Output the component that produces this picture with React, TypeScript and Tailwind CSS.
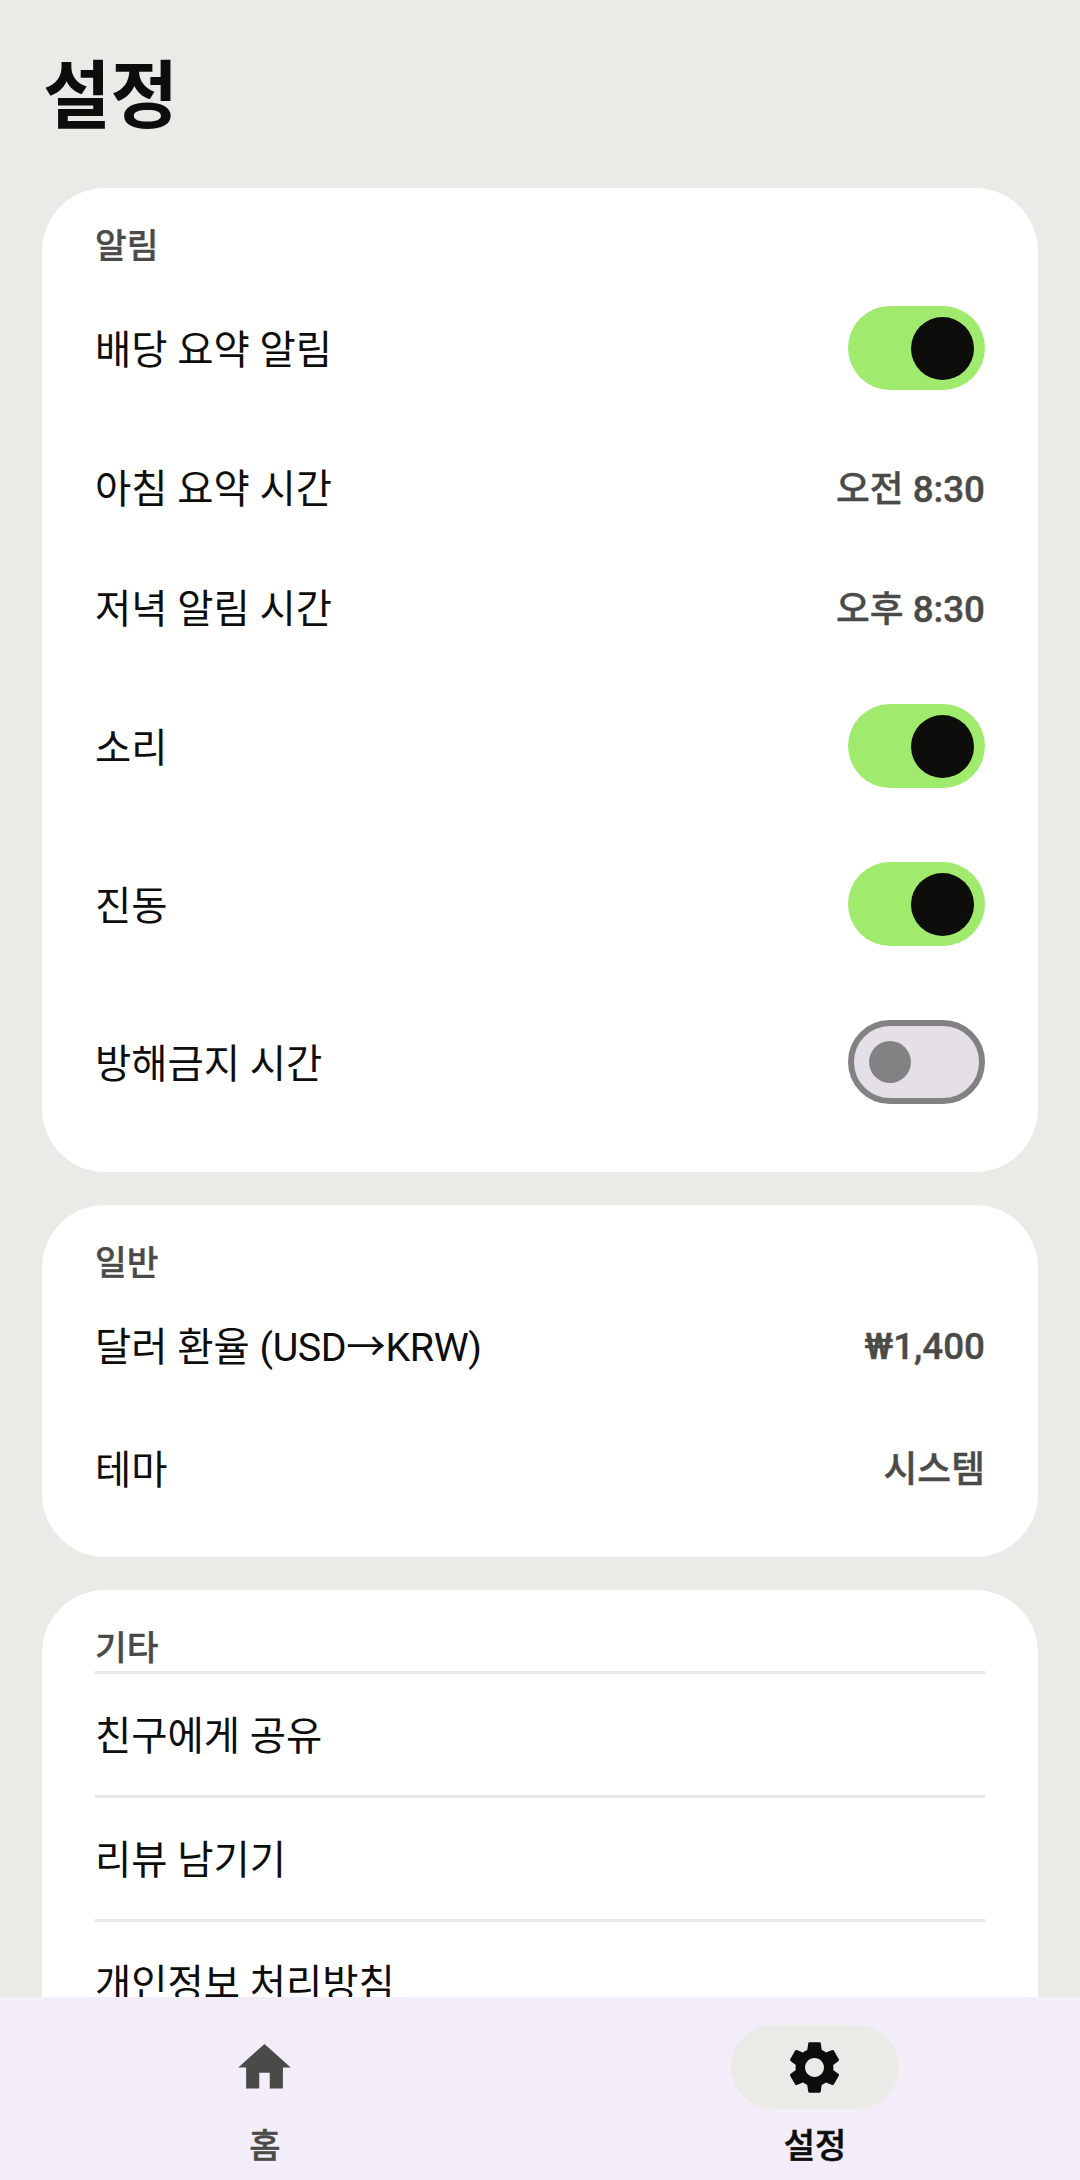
import React from "react";

const font = { fontFamily: '"Roboto", "Noto Sans CJK KR", sans-serif' };

function Toggle({ on }: { on: boolean }) {
  return on ? (
    <div className="flex h-[84px] w-[137px] shrink-0 items-center justify-end rounded-full bg-[#a0ea6e] pr-[11px]">
      <div className="h-[63px] w-[63px] rounded-full bg-[#0d0d0b]" />
    </div>
  ) : (
    <div className="flex h-[84px] w-[137px] shrink-0 items-center rounded-full border-[6px] border-[#828282] bg-[#e5e0e8] pl-[15px]">
      <div className="h-[42px] w-[42px] rounded-full bg-[#828282]" />
    </div>
  );
}

function ToggleRow({ label, on }: { label: string; on: boolean }) {
  return (
    <div className="flex h-[158px] items-center justify-between">
      <span className="pt-[5px] text-[39.4px] text-[#0d0d0b]">{label}</span>
      <Toggle on={on} />
    </div>
  );
}

function TimeRow({ label, value }: { label: string; value: string }) {
  return (
    <div className="flex h-[120px] items-center justify-between">
      <span className="pt-[5px] text-[39.4px] text-[#0d0d0b]">{label}</span>
      <span className="pt-[5px] text-[36.75px] font-medium text-[#4a4b48] [-webkit-text-stroke:0.4px_#4a4b48]">{value}</span>
    </div>
  );
}

function ValueRow({ label, value }: { label: React.ReactNode; value: string }) {
  return (
    <div className="flex h-[123px] items-center justify-between">
      <span className="pt-[1px] text-[39.4px] text-[#0d0d0b]">{label}</span>
      <span className="pb-[2px] text-[36.75px] font-medium text-[#4a4b48] [-webkit-text-stroke:0.4px_#4a4b48]">{value}</span>
    </div>
  );
}

function Label({ children }: { children: React.ReactNode }) {
  return (
    <div className="h-[42px] text-[34.5px] font-medium leading-[39px] text-[#4a4b48] [-webkit-text-stroke:0.3px_#4a4b48]">
      {children}
    </div>
  );
}

function LinkRow({ label }: { label: string }) {
  return (
    <div className="flex h-[124px] items-center border-t-[3px] border-[#e6e6e6] pt-[5px]">
      <span className="text-[39.4px] text-[#0d0d0b]">{label}</span>
    </div>
  );
}

export default function App() {
  return (
    <div className="flex h-[2180px] w-[1080px] flex-col overflow-hidden bg-[#e9ebe6]" style={font}>
      <main className="min-h-0 flex-1 overflow-hidden px-[42px]">
        <h1 className="h-[188px] pl-[1px] pt-[45px] text-[73.5px] font-bold leading-[104px] text-[#0d0d0b]">설정</h1>

        <section className="rounded-[63px] bg-white px-[53px] pb-[31px] pt-[39px]">
          <Label>알림</Label>
          <ToggleRow label="배당 요약 알림" on />
          <TimeRow label="아침 요약 시간" value="오전 8:30" />
          <TimeRow label="저녁 알림 시간" value="오후 8:30" />
          <ToggleRow label="소리" on />
          <ToggleRow label="진동" on />
          <ToggleRow label="방해금지 시간" on={false} />
        </section>

        <section className="mt-[33px] rounded-[63px] bg-white px-[53px] pb-[25px] pt-[39px]">
          <Label>일반</Label>
          <ValueRow
            label={
              <>
                달러 환율 <span className="tracking-[-0.35px]">(USD→KRW)</span>
              </>
            }
            value="₩1,400"
          />
          <ValueRow label="테마" value="시스템" />
        </section>

        <section className="mt-[33px] rounded-t-[63px] bg-white px-[53px] pt-[39px]">
          <Label>기타</Label>
          <LinkRow label="친구에게 공유" />
          <LinkRow label="리뷰 남기기" />
          <LinkRow label="개인정보 처리방침" />
        </section>
      </main>

      <nav className="flex h-[183px] shrink-0 justify-between bg-[#f3edf9] px-[181px] pt-[28px]">
        <div className="flex w-[168px] flex-col items-center">
          <div className="flex h-[84px] w-[168px] items-center justify-center rounded-full pr-[1px]">
            <svg width="63" height="63" viewBox="0 0 24 24" fill="#4a4b48">
              <path d="M10 20v-6h4v6h5v-8h3L12 3 2 12h3v8z" />
            </svg>
          </div>
          <span className="mt-[12px] text-[34px] font-medium text-[#4a4b48] [-webkit-text-stroke:0.4px_#4a4b48]">홈</span>
        </div>
        <div className="flex w-[168px] flex-col items-center">
          <div className="flex h-[84px] w-[168px] items-center justify-center rounded-full bg-[#e9ebe6] pr-[1px]">
            <svg width="63" height="63" viewBox="0 0 24 24" fill="#0d0d0b">
              <path d="M19.14 12.94c.04-.3.06-.61.06-.94 0-.32-.02-.64-.07-.94l2.03-1.58a.49.49 0 0 0 .12-.61l-1.92-3.32a.488.488 0 0 0-.59-.22l-2.39.96c-.5-.38-1.03-.7-1.62-.94l-.36-2.54a.484.484 0 0 0-.48-.41h-3.84c-.24 0-.43.17-.47.41l-.36 2.54c-.59.24-1.13.57-1.62.94l-2.39-.96c-.22-.08-.47 0-.59.22L2.74 8.87c-.12.21-.08.47.12.61l2.03 1.58c-.05.3-.09.63-.09.94s.02.64.07.94l-2.03 1.58a.49.49 0 0 0-.12.61l1.92 3.32c.12.22.37.29.59.22l2.39-.96c.5.38 1.03.7 1.62.94l.36 2.54c.05.24.24.41.48.41h3.84c.24 0 .44-.17.47-.41l.36-2.54c.59-.24 1.13-.56 1.62-.94l2.39.96c.22.08.47 0 .59-.22l1.92-3.32c.12-.22.07-.47-.12-.61l-2.01-1.58zM12 15.6c-1.98 0-3.6-1.62-3.6-3.6s1.62-3.6 3.6-3.6 3.6 1.62 3.6 3.6-1.62 3.6-3.6 3.6z" />
            </svg>
          </div>
          <span className="mt-[12px] text-[34px] font-medium text-[#0d0d0b] [-webkit-text-stroke:0.6px_#0d0d0b]">설정</span>
        </div>
      </nav>
    </div>
  );
}
